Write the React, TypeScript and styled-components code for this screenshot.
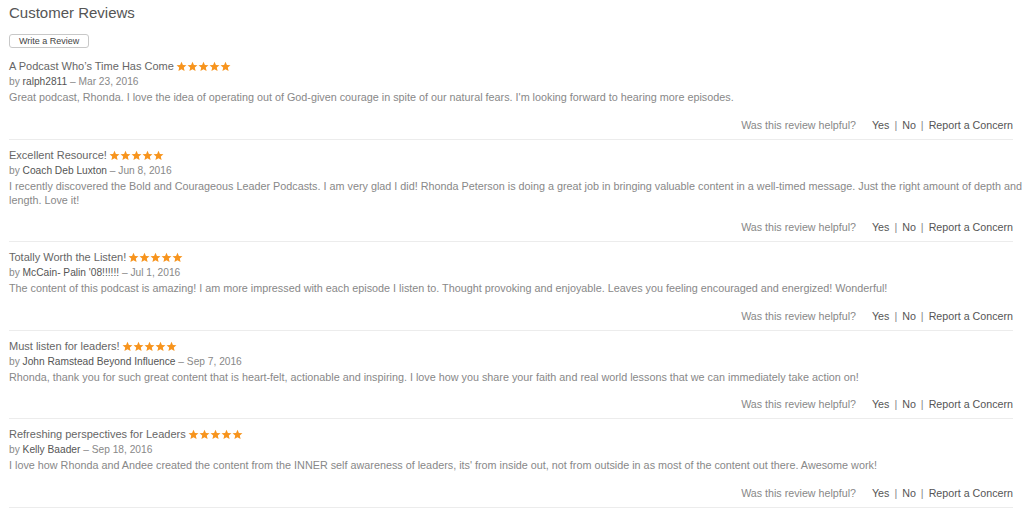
import React from "react";
import styled, { createGlobalStyle } from "styled-components";

interface IReview {
  title: string;
  author: string;
  date: string;
  body: string;
}

const reviews: IReview[] = [
  {
    title: "A Podcast Who’s Time Has Come",
    author: "ralph2811",
    date: "Mar 23, 2016",
    body: "Great podcast, Rhonda. I love the idea of operating out of God-given courage in spite of our natural fears. I'm looking forward to hearing more episodes.",
  },
  {
    title: "Excellent Resource!",
    author: "Coach Deb Luxton",
    date: "Jun 8, 2016",
    body: "I recently discovered the Bold and Courageous Leader Podcasts. I am very glad I did! Rhonda Peterson is doing a great job in bringing valuable content in a well-timed message. Just the right amount of depth and length. Love it!",
  },
  {
    title: "Totally Worth the Listen!",
    author: "McCain- Palin '08!!!!!!",
    date: "Jul 1, 2016",
    body: "The content of this podcast is amazing! I am more impressed with each episode I listen to. Thought provoking and enjoyable. Leaves you feeling encouraged and energized! Wonderful!",
  },
  {
    title: "Must listen for leaders!",
    author: "John Ramstead Beyond Influence",
    date: "Sep 7, 2016",
    body: "Rhonda, thank you for such great content that is heart-felt, actionable and inspiring. I love how you share your faith and real world lessons that we can immediately take action on!",
  },
  {
    title: "Refreshing perspectives for Leaders",
    author: "Kelly Baader",
    date: "Sep 18, 2016",
    body: "I love how Rhonda and Andee created the content from the INNER self awareness of leaders, its' from inside out, not from outside in as most of the content out there. Awesome work!",
  },
];

function Stars(): JSX.Element {
  return (
    <StarRow>
      {[0, 1, 2, 3, 4].map((i) => (
        <svg key={i} width="11" height="11" viewBox="0 0 24 24">
          <path
            d="M12 1.5l3.1 7.1 7.7.7-5.8 5.1 1.7 7.6L12 18l-6.7 4 1.7-7.6-5.8-5.1 7.7-.7z"
            fill="#f7941d"
          />
        </svg>
      ))}
    </StarRow>
  );
}

function ReviewItem(props: { review: IReview }): JSX.Element {
  const review = props.review;

  return (
    <ReviewContainer>
      <ReviewTitle>
        {review.title}
        <Stars />
      </ReviewTitle>

      <Byline>
        by <Author>{review.author}</Author> – {review.date}
      </Byline>

      <Body>{review.body}</Body>

      <Helpful>
        <HelpfulLabel>Was this review helpful?</HelpfulLabel>
        <Link>Yes</Link>
        <Sep>|</Sep>
        <Link>No</Link>
        <Sep>|</Sep>
        <Link>Report a Concern</Link>
      </Helpful>
    </ReviewContainer>
  );
}

export default function App(): JSX.Element {
  return (
    <>
      <GlobalStyle />
      <Page>
        <Heading>Customer Reviews</Heading>
        <WriteButton>Write a Review</WriteButton>
        <ReviewList>
          {reviews.map((r) => (
            <ReviewItem review={r} key={r.title} />
          ))}
        </ReviewList>
      </Page>
    </>
  );
}

const GlobalStyle = createGlobalStyle`
  body {
    margin: 0;
    background: #fff;
    font-family: "Liberation Sans", Arial, sans-serif;
  }
`;

const Page = styled.main`
  padding: 4px 11px 0 9px;
`;

const Heading = styled.h2`
  margin: 0;

  font-size: 15px;
  font-weight: 400;
  line-height: 18px;
  color: #555;
`;

const WriteButton = styled.button`
  display: block;

  height: 14px;
  margin: 12px 0 0 0;
  padding: 0 9px;
  border: 1px solid #c8c8c8;
  border-radius: 3px;

  font-family: inherit;
  font-size: 9px;
  line-height: 12px;
  color: #444;

  background: #fff;
`;

const ReviewList = styled.div`
  margin-top: 11px;
`;

const ReviewContainer = styled.article`
  padding: 0 0 7px 0;
  margin-bottom: 8px;
  border-bottom: 1px solid #ececec;
`;

const ReviewTitle = styled.h3`
  display: flex;
  align-items: center;
  gap: 2px;

  margin: 0;

  font-size: 11px;
  font-weight: 400;
  line-height: 15px;
  color: #666;
`;

const StarRow = styled.span`
  display: inline-flex;
`;

const Byline = styled.div`
  font-size: 10.2px;
  line-height: 15px;
  color: #888;
`;

const Author = styled.span`
  color: #555;
`;

const Body = styled.p`
  margin: 1px -10px 0 0;

  font-size: 10.8px;
  line-height: 14px;
  color: #888;
`;

const Helpful = styled.div`
  display: flex;
  justify-content: flex-end;
  align-items: center;
  gap: 5px;

  margin-top: 13.5px;

  font-size: 10.7px;
  line-height: 14px;
`;

const HelpfulLabel = styled.span`
  margin-right: 11px;
  color: #888;
`;

const Link = styled.span`
  color: #555;
`;

const Sep = styled.span`
  color: #888;
`;
